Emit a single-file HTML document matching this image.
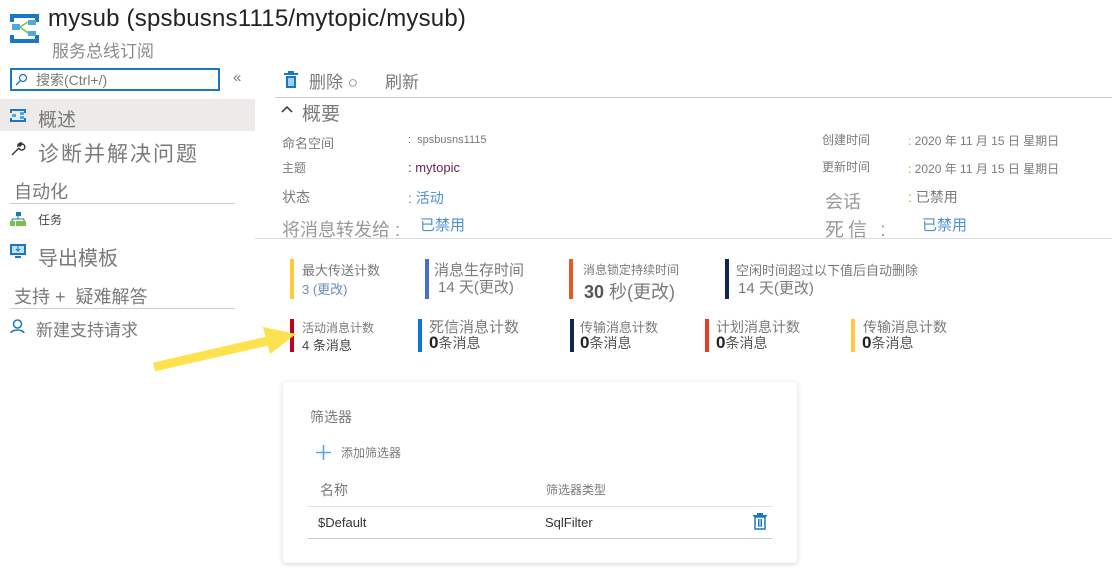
<!DOCTYPE html>
<html><head><meta charset="utf-8"><style>
*{margin:0;padding:0;box-sizing:border-box}
body{width:1112px;height:583px;background:#fff;font-family:"Liberation Sans","Noto Sans CJK SC",sans-serif;color:#605e5c;position:relative;overflow:hidden}
.a{position:absolute;white-space:nowrap}
.g{color:#7a7a7a}
.lnk{color:#4d8fd1}
.bar{position:absolute;width:4px}
</style></head><body>
<svg class="a" style="left:10px;top:14px" width="29" height="29" viewBox="0 0 29 29">
<path d="M0 0h29v4H0zM0 25h29v4H0zM0 0h4v8H0zM25 0h4v8H25zM0 21h4v8H0zM25 21h4v8H25z" fill="#1a78c2"/>
<rect x="2" y="10" width="8" height="6" fill="#50a8e0"/><rect x="18" y="6" width="8" height="5" fill="#50a8e0"/><rect x="18" y="17" width="8" height="5" fill="#50a8e0"/>
<path d="M10 13L18 8M10 13L18 19" stroke="#7bc043" stroke-width="1.5" fill="none"/></svg>
<div class="a" style="left:48px;top:5px;font-size:24px;letter-spacing:0.2px;color:#222">mysub (spsbusns1115/mytopic/mysub)</div>
<div class="a g" style="left:52px;top:37px;font-size:17px;color:#8a8a8a">服务总线订阅</div>
<div class="a" style="left:10px;top:68px;width:210px;height:23px;border:2px solid #1a78c2"></div>
<svg class="a" style="left:15px;top:73px" width="13" height="13"><circle cx="8" cy="5" r="3.5" stroke="#1a78c2" fill="none" stroke-width="1.3"/><path d="M5.5 7.5L1 12" stroke="#1a78c2" stroke-width="1.3"/></svg>
<div class="a g" style="left:36px;top:70px;font-size:14px">搜索(Ctrl+/)</div>
<div class="a g" style="left:233px;top:69px;font-size:15px">«</div>
<div class="a" style="left:0;top:99px;width:255px;height:32px;background:#edebe9"></div>
<svg class="a" style="left:10px;top:109px" width="16" height="13" viewBox="0 0 16 13"><path d="M0 0h16v2H0zM0 11h16v2H0zM0 0h2v4H0zM14 0h2v4h-2zM0 9h2v4H0zM14 9h2v4h-2z" fill="#1a78c2"/><rect x="2" y="5" width="4" height="3" fill="#50a8e0"/><rect x="10" y="3" width="4" height="3" fill="#50a8e0"/><rect x="10" y="7" width="4" height="3" fill="#50a8e0"/></svg>
<div class="a g" style="left:38px;top:105px;font-size:19px">概述</div>
<svg class="a" style="left:10px;top:141px" width="16" height="16"><path d="M2 14L9 7M9 7a3 3 0 1 0 3-4l-2 2-1-1 2-2a3 3 0 0 0-3 4" stroke="#333" stroke-width="1.4" fill="none"/></svg>
<div class="a g" style="left:38px;top:138px;font-size:21px;letter-spacing:2px">诊断并解决问题</div>
<div class="a g" style="left:14px;top:178px;font-size:18px">自动化</div>
<div class="a" style="left:10px;top:203px;width:225px;height:1px;background:#ccc"></div>
<svg class="a" style="left:10px;top:212px" width="16" height="14"><rect x="6" y="0" width="5" height="4" fill="#1a78c2"/><path d="M8 4v3M2 7h12M2 7v2M14 7v2" stroke="#1a78c2"/><rect x="0" y="9" width="5" height="5" fill="#7bc043"/><rect x="6" y="9" width="5" height="5" fill="#7bc043"/><rect x="11" y="9" width="5" height="5" fill="#7bc043"/></svg>
<div class="a" style="left:38px;top:211px;font-size:12px;color:#444">任务</div>
<svg class="a" style="left:10px;top:244px" width="16" height="15"><rect x="0" y="0" width="16" height="11" fill="#1a78c2"/><rect x="2" y="2" width="12" height="7" fill="#bfe0f5"/><path d="M8 2v5M6 5l2 2 2-2" stroke="#1a78c2" fill="none"/><rect x="5" y="12" width="6" height="2" fill="#1a78c2"/></svg>
<div class="a g" style="left:38px;top:242px;font-size:20px">导出模板</div>
<div class="a g" style="left:14px;top:283px;font-size:18px">支持 +&nbsp; 疑难解答</div>
<div class="a" style="left:10px;top:308px;width:225px;height:1px;background:#ccc"></div>
<svg class="a" style="left:10px;top:318px" width="15" height="16"><circle cx="7.5" cy="6" r="4" stroke="#1a78c2" stroke-width="1.5" fill="none"/><path d="M1 15c1-4 12-4 13 0" stroke="#1a78c2" stroke-width="1.5" fill="none"/></svg>
<div class="a g" style="left:36px;top:316px;font-size:17px">新建支持请求</div>
<svg class="a" style="left:284px;top:71px" width="14" height="17"><rect x="0" y="2" width="14" height="2" fill="#1a78c2"/><rect x="4" y="0" width="6" height="2" fill="#1a78c2"/><rect x="2" y="5" width="10" height="12" fill="#1a78c2"/><rect x="4" y="7" width="6" height="8" fill="#9fd0f0"/></svg>
<div class="a g" style="left:309px;top:68px;font-size:17px">删除 ○</div>
<div class="a g" style="left:385px;top:68px;font-size:17px">刷新</div>
<div class="a" style="left:275px;top:97px;width:837px;height:1px;background:#ccc"></div>
<svg class="a" style="left:281px;top:105px" width="12" height="8"><path d="M1 7L6 2l5 5" stroke="#444" stroke-width="1.6" fill="none"/></svg>
<div class="a g" style="left:302px;top:99px;font-size:19px">概要</div>
<div class="a g" style="left:282px;top:133px;font-size:13px">命名空间</div>
<div class="a g" style="left:408px;top:134px;font-size:11px">:&nbsp; spsbusns1115</div>
<div class="a g" style="left:282px;top:159px;font-size:12px">主题</div>
<div class="a" style="left:408px;top:160px;font-size:13px;color:#6b1f4f">: mytopic</div>
<div class="a g" style="left:282px;top:187px;font-size:14px">状态</div>
<div class="a" style="left:408px;top:188px;font-size:14px"><span class="g">:</span> <span class="lnk">活动</span></div>
<div class="a g" style="left:282px;top:216px;font-size:18px;color:#999">将消息转发给 :</div>
<div class="a lnk" style="left:420px;top:214px;font-size:15px">已禁用</div>
<div class="a g" style="left:822px;top:131px;font-size:12px">创建时间</div>
<div class="a g" style="left:908px;top:132px;font-size:12px"><span style="color:#d08a2a">:</span> 2020 年 11 月 15 日 星期日</div>
<div class="a g" style="left:822px;top:158px;font-size:12px">更新时间</div>
<div class="a g" style="left:908px;top:160px;font-size:12px"><span style="color:#d08a2a">:</span> 2020 年 11 月 15 日 星期日</div>
<div class="a g" style="left:825px;top:188px;font-size:18px;color:#999">会话</div>
<div class="a g" style="left:908px;top:187px;font-size:14px"><span style="color:#d08a2a">:</span> 已禁用</div>
<div class="a g" style="left:825px;top:215px;font-size:19px;color:#999;letter-spacing:4px">死信 :</div>
<div class="a lnk" style="left:922px;top:214px;font-size:15px">已禁用</div>
<div class="a" style="left:255px;top:238px;width:857px;height:1px;background:#ddd"></div>
<div class="bar" style="left:290px;top:259px;height:40px;background:#ffc83d"></div>
<div class="a g" style="left:302px;top:260px;font-size:13px">最大传送计数</div>
<div class="a lnk" style="left:302px;top:279px;font-size:13px;color:#6b8bbd">3 (更改)</div>
<div class="bar" style="left:425px;top:259px;height:40px;background:#4472c4"></div>
<div class="a g" style="left:434px;top:259px;font-size:15px">消息生存时间</div>
<div class="a g" style="left:438px;top:276px;font-size:15px">14 天(更改)</div>
<div class="bar" style="left:569px;top:259px;height:40px;background:#e35b24"></div>
<div class="a g" style="left:583px;top:261px;font-size:12px">消息锁定持续时间</div>
<div class="a g" style="left:584px;top:278px;font-size:18px"><b style="color:#555">30</b> 秒(更改)</div>
<div class="bar" style="left:725px;top:259px;height:40px;background:#0f2650"></div>
<div class="a g" style="left:736px;top:260px;font-size:13px">空闲时间超过以下值后自动删除</div>
<div class="a g" style="left:738px;top:277px;font-size:15px">14 天(更改)</div>
<div class="bar" style="left:290px;top:319px;height:33px;background:#c4001b"></div>
<div class="a g" style="left:302px;top:319px;font-size:12px">活动消息计数</div>
<div class="a" style="left:302px;top:335px;font-size:13px;color:#444">4 条消息</div>
<div class="bar" style="left:418px;top:319px;height:33px;background:#0a78d4"></div>
<div class="a g" style="left:429px;top:316px;font-size:15px">死信消息计数</div>
<div class="a" style="left:429px;top:333px;font-size:14px;color:#555"><b style="font-size:17px;color:#222">0</b>条消息</div>
<div class="bar" style="left:570px;top:319px;height:33px;background:#0f2650"></div>
<div class="a g" style="left:580px;top:317px;font-size:13px">传输消息计数</div>
<div class="a" style="left:580px;top:333px;font-size:14px;color:#555"><b style="font-size:17px;color:#222">0</b>条消息</div>
<div class="bar" style="left:705px;top:319px;height:33px;background:#e83a2a"></div>
<div class="a g" style="left:716px;top:317px;font-size:14px">计划消息计数</div>
<div class="a" style="left:716px;top:333px;font-size:14px;color:#555"><b style="font-size:17px;color:#222">0</b>条消息</div>
<div class="bar" style="left:851px;top:319px;height:33px;background:#ffc83d"></div>
<div class="a g" style="left:863px;top:317px;font-size:14px">传输消息计数</div>
<div class="a" style="left:862px;top:333px;font-size:14px;color:#555"><b style="font-size:17px;color:#222">0</b>条消息</div>
<svg class="a" style="left:0;top:0" width="1112" height="583"><path d="M154 367L272 340" stroke="#fde24f" stroke-width="9"/><polygon points="263,327 296,334 270,354" fill="#fde24f"/></svg>
<div class="a" style="left:283px;top:382px;width:514px;height:181px;background:#fff;border-radius:3px;box-shadow:0 1px 5px rgba(0,0,0,.18)"></div>
<div class="a g" style="left:310px;top:407px;font-size:14px">筛选器</div>
<svg class="a" style="left:316px;top:445px" width="15" height="15"><path d="M7.5 0v15M0 7.5h15" stroke="#58a8e0" stroke-width="1.6"/></svg>
<div class="a g" style="left:341px;top:444px;font-size:12px">添加筛选器</div>
<div class="a g" style="left:320px;top:480px;font-size:14px">名称</div>
<div class="a g" style="left:546px;top:481px;font-size:12px">筛选器类型</div>
<div class="a" style="left:308px;top:506px;width:464px;height:1px;background:#e3e3e3"></div>
<div class="a" style="left:318px;top:515px;font-size:13px;color:#333">$Default</div>
<div class="a" style="left:545px;top:515px;font-size:13px;color:#333">SqlFilter</div>
<svg class="a" style="left:753px;top:513px" width="14" height="17"><rect x="0" y="2" width="14" height="1.5" fill="#1a78c2"/><rect x="4" y="0" width="6" height="2" fill="#1a78c2"/><rect x="2" y="4" width="10" height="12" fill="none" stroke="#1a78c2" stroke-width="1.5"/><path d="M5.5 6v8M7 6v8M8.5 6v8" stroke="#1a78c2"/></svg>
<div class="a" style="left:308px;top:538px;width:464px;height:1px;background:#ccc"></div>
</body></html>
